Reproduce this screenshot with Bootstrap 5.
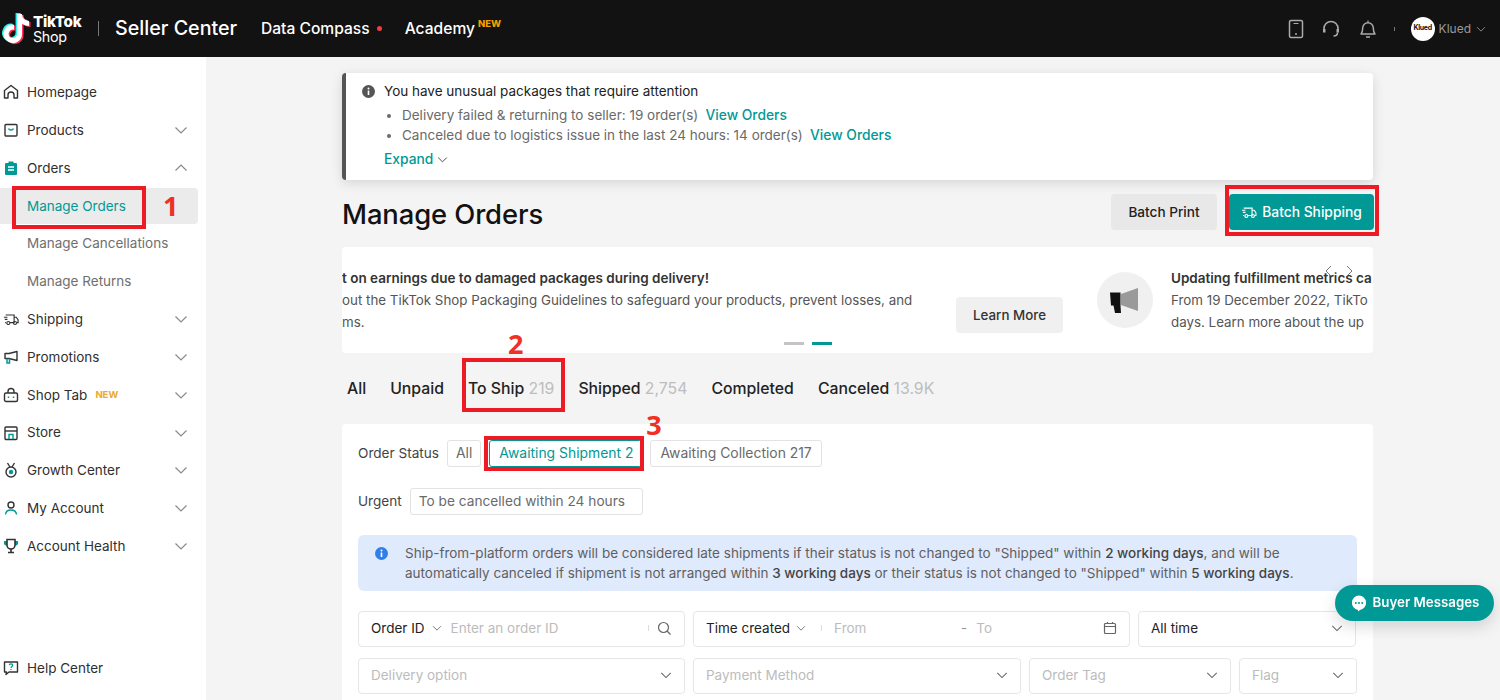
<!DOCTYPE html>
<html lang="en">
<head>
<meta charset="utf-8">
<title>Manage Orders</title>
<link href="https://cdn.jsdelivr.net/npm/bootstrap@5.3.0/dist/css/bootstrap.min.css" rel="stylesheet">
<style>
html,body{height:700px;overflow:hidden}
body{font-family:Inter,"Liberation Sans",sans-serif;font-size:13.5px;color:#121212;background:#f4f4f4}
svg{display:block;flex:none}
.top-bar{height:57px;background:#121212;color:#fff}
.logo-mark{margin-left:1px;width:30px;height:34px;overflow:visible}
.logo-words{margin-left:2px;line-height:15px;color:#fff;width:50px}
.logo-words b{display:block;font-weight:800;font-size:15.2px;letter-spacing:-.3px}
.logo-words span{display:block;font-weight:400;font-size:14.3px;letter-spacing:-.3px}
.top-sep{width:1px;height:15px;background:#777;margin:0 16px 0 15px}
.brand-title{font-size:19.7px;font-weight:500;width:146px}
.top-link{font-size:15.6px;font-weight:500}
.red-dot{width:5px;height:5px;border-radius:50%;background:#ee3f3f;margin:0 23px 0 7px}
.new-tag{font-size:9.5px;font-weight:800;color:#f0a000;margin:-9px 0 0 3px}
.top-icons{color:#aaa;margin-right:14px}
.ico-a{margin-right:16px}
.ico-b{margin:0 18px 0 1px}
.tiny-sep{width:1px;height:4px;background:#777;margin:0 16px 0 17px}
.avatar{width:24px;height:24px;border-radius:50%;background:#fff;color:#121212;font-size:7px;font-weight:700;letter-spacing:-.3px}
.user-name{color:#9a9a9a;font-size:12px;margin:0 5px 0 4px}
.page-row{height:643px}
.side-nav{width:206px;background:#fff;padding-top:16.5px}
.side-item{height:37.8px;padding:0 18px 0 3px;color:#303030;white-space:nowrap}
.side-item svg.ico{margin-right:8px;width:16px;height:16px}
.side-chev{margin-left:auto;color:#8a8a8a}
.side-sub{height:37.8px;padding-left:27px;color:#6f6f6f;white-space:nowrap;margin-right:8px;position:relative}
.side-sub.on{color:#009995;background:#ebebeb;border-radius:0 4px 4px 0;height:36px;margin-top:1px;margin-bottom:.8px}
.side-new{font-size:9.5px;font-weight:700;color:#e9a92a;margin-left:8px}
.side-foot{margin-top:auto;margin-bottom:13px}
.work-area{padding:16px 127px 0 136px;overflow:hidden;background:#f4f4f4}
.notice{height:107px;background:#fff;border-left:4px solid #555;border-radius:4px;box-shadow:0 3px 12px rgba(0,0,0,.13);padding:8px 0 0 16px;line-height:20px;color:#222}
.notice-icon{margin-right:9px}
.notice ul{margin:4px 0 0;padding:0 0 0 18px;color:#6a6a6a}
.notice li{height:20px}
.teal-link{color:#009995;font-weight:500;text-decoration:none;margin-left:3.5px;font-size:13.8px}
.notice-body{margin-left:22px}
.expand-row{color:#009995;font-weight:500;margin-top:4px;font-size:13.8px}
.expand-row svg{color:#444}
.title-row{height:61px;margin-top:6px;padding-top:8px}
.page-title{font-size:27.4px;font-weight:500;margin:7px 0 0;line-height:1;letter-spacing:-.1px}
.btn-soft,.btn-teal{height:36px;border-radius:4px;font-weight:500;border:0;padding:0;display:flex;align-items:center;justify-content:center}
.btn-soft{width:106px;background:#e8e8e8;color:#222;font-size:13.6px}
.btn-teal{width:145px;background:#009995;color:#fff;gap:5px;margin:0 -1px 0 12px;position:relative;font-size:13.8px}
.promo{height:106px;background:#fff;border-radius:4px;overflow:hidden;position:relative;font-size:13.35px}
.promo-left{width:600px;padding-top:20px;color:#555;line-height:22px;white-space:nowrap}
.promo-left b,.promo-right b{font-weight:600;color:#333;display:block;font-size:13.5px}
.promo-btn{width:107px;height:36px;background:#f0f0f0;border-radius:4px;color:#333;font-weight:500;margin:50px 0 0 14px}
.promo-disc{width:56px;height:56px;border-radius:50%;background:#f0f0f0;margin:25px 18px 0 34px}
.promo-right{flex:1;min-width:0;padding-top:20px;color:#555;line-height:22px;white-space:nowrap;overflow:hidden}
.promo-arrows{position:absolute;top:18px;right:19px;gap:12px;color:#777}
.promo-dots{position:absolute;bottom:8px;left:442px;gap:8px}
.promo-dots i{display:block;width:20px;height:3.5px;background:#c4c4c4}
.promo-dots i.on{background:#009995}
.tab-row{height:71px;font-size:15.8px;font-weight:500;padding-left:5px;gap:24px;color:#222}
.tab-count{color:#bdbdbd;font-weight:400}
.tab-ship{position:relative}
.filter-card{background:#fff;border-radius:4px 4px 0 0;height:276px;padding:16px 16px 0}
.chip-line{height:27px;gap:8px}
.chip-line.second{margin-top:21px}
.field-label{color:#444;font-size:13.6px}
.chip{height:27px;border:1px solid #e3e3e3;border-radius:3px;padding:0 8px;color:#6a6a6a;display:flex;align-items:center;white-space:nowrap;position:relative;font-size:13.9px}
.chip.on{color:#009995;border-color:#009995;padding-left:9px}
.chip.coll{padding:0 9px}
.chip.wide{min-width:233px;font-size:13.7px}
.info-box{height:56px;margin-top:20px;background:#dfeafd;border-radius:6px;padding:8px 0 0 17px;color:#5f5f5f;line-height:20px;gap:17px;width:999px}
.info-box b{font-weight:500;color:#444}
.form-line{gap:8px;height:36px}
.form-line.first{margin-top:20px}
.form-line.next{margin-top:11px}
.field{height:36px;background:#fff;border:1px solid #e6e6e6;border-radius:4px;padding:0 12px 2px;color:#bcbcbc;white-space:nowrap}
.field .val{color:#222}
.f-327{width:327px}.f-328{width:328px}.f-437{width:437px}.f-218{width:218px}.f-202{width:202px}.f-118{width:118px}
.chev-end{margin-left:auto;color:#666}
.hair{width:1px;height:6px;background:#ddd}
.chev-a{margin:0 9px 0 7px;color:#666}
.chev-b{margin:0 15px 0 6px;color:#666}
.from-lab{width:127px;margin-left:12px}
.dash{color:#999;margin-right:9px}
.anno{position:absolute;border:4px solid #ed1c24;pointer-events:none}
.anno-num{position:absolute;color:#ee3124;font-family:"Open Sans",sans-serif;font-weight:700;font-size:27px;line-height:1}
.an-1{left:12px;top:-2px;width:134px;height:43px}
.num-1{left:163px;top:4px}
.an-bs{left:-4px;top:-9px;width:154px;height:51px}
.an-2{left:-6px;top:-19px;width:103px;height:54px}
.num-2{left:40px;top:-47px}
.an-3{left:-6px;top:-5px;width:160px;height:35px}
.num-3{left:156px;top:-30px}
.chat-pill{position:fixed;right:6px;top:585px;width:159px;height:36px;background:#009995;color:#fff;border-radius:18px;font-weight:600;gap:5px;box-shadow:0 6px 16px rgba(0,0,0,.14);font-size:13.3px}
</style>
</head>
<body>
<svg width="0" height="0" style="position:absolute"><defs>
<symbol id="ch" viewBox="0 0 14 14"><path d="M1.5 4.5 7 10l5.500-5.500" fill="none" stroke="currentColor" stroke-width="1.2"/></symbol>
<symbol id="note" viewBox="0 0 24 24"><path d="M19.589 6.686a4.793 4.793 0 0 1-3.770-4.245V2h-3.445v13.672a2.896 2.896 0 0 1-5.201 1.743 2.895 2.895 0 0 1 3.183-4.510v-3.500a6.329 6.329 0 0 0-5.394 10.692 6.330 6.330 0 0 0 10.857-4.424V8.687a8.182 8.182 0 0 0 4.773 1.526V6.790a4.831 4.831 0 0 1-1.003-.104z" fill="currentColor"/></symbol>
<symbol id="truck" viewBox="0 0 18 16"><path d="M5 3.500h7.500v8.500H8M12.500 6H15l2 3v3h-1.500M1 6h4M2 8.500h3M3 3.500h2M2.200 12h1" fill="none" stroke="currentColor" stroke-width="1.300"/><circle cx="6" cy="12.500" r="1.700" fill="none" stroke="currentColor" stroke-width="1.300"/><circle cx="13.500" cy="12.500" r="1.700" fill="none" stroke="currentColor" stroke-width="1.300"/></symbol>
</defs></svg>

<header class="top-bar d-flex align-items-center">
  <svg class="logo-mark" viewBox="0 0 30 34"><use href="#note" x="-3.500" y="-2" width="35" height="35" color="#25f4ee"/><use href="#note" x="-.5" y="0" width="35" height="35" color="#fe2c55"/><use href="#note" x="-2" y="-1" width="35" height="35" color="#fff"/></svg>
  <div class="logo-words"><b>TikTok</b><span>Shop</span></div>
  <div class="top-sep"></div>
  <div class="brand-title">Seller Center</div>
  <div class="top-link">Data Compass</div><div class="red-dot"></div>
  <div class="top-link">Academy</div><div class="new-tag">NEW</div>
  <div class="ms-auto d-flex align-items-center top-icons">
    <svg width="16" height="20" viewBox="0 0 16 20" class="ico-a"><rect x="1.500" y="1.500" width="13" height="17" rx="1.500" fill="none" stroke="currentColor" stroke-width="1.500"/><path d="M5.500 4.500h5" stroke="currentColor"/><circle cx="8" cy="15" r="1" fill="currentColor"/></svg>
    <svg width="20" height="20" viewBox="0 0 20 20" class="ico-b"><path d="M3 12V9.500a7 7 0 0 1 14 0V12" fill="none" stroke="currentColor" stroke-width="1.600"/><path d="M2 10h2.500v3.500H2zM15.500 10H18v3.500h-2.500z" fill="currentColor"/><path d="M16.500 13.500c0 2-1.500 3.500-4 3.500" fill="none" stroke="currentColor" stroke-width="1.600"/></svg>
    <svg width="18" height="20" viewBox="0 0 18 20"><path d="M2 15c1.500-1.500 1.700-3 1.700-6a5.300 5.300 0 0 1 10.600 0c0 3 .2 4.500 1.700 6z" fill="none" stroke="currentColor" stroke-width="1.500" stroke-linejoin="round"/><path d="M7 18h4" stroke="currentColor" stroke-width="1.500"/><path d="M9 1.500v2" stroke="currentColor" stroke-width="1.200"/></svg>
    <div class="tiny-sep"></div>
    <div class="avatar d-flex align-items-center justify-content-center">Klued</div>
    <div class="user-name">Klued</div>
    <svg width="10" height="10" style="color:#9a9a9a"><use href="#ch"/></svg>
  </div>
</header>

<div class="page-row d-flex">
  <nav class="side-nav d-flex flex-column flex-shrink-0">
    <div class="side-item d-flex align-items-center"><svg class="ico" viewBox="0 0 16 16"><path d="M1.500 6.500 8 1.500l6.500 5v7.500h-3.500v-3a3 3 0 0 0-6 0v3H1.500z" fill="none" stroke="#333" stroke-width="1.400" stroke-linejoin="round"/></svg>Homepage</div>
    <div class="side-item d-flex align-items-center"><svg class="ico" viewBox="0 0 16 16"><rect x="2" y="2.500" width="12" height="11.500" rx="1" fill="none" stroke="#333" stroke-width="1.400"/><path d="M5.500 6.500c.7 2 4.300 2 5 0" fill="none" stroke="#009995" stroke-width="1.400"/></svg>Products<svg class="side-chev" width="14" height="14"><use href="#ch"/></svg></div>
    <div class="side-item d-flex align-items-center"><svg class="ico" viewBox="0 0 16 16"><path d="M5.500 1.500h5V3H13a1 1 0 0 1 1 1v10a1 1 0 0 1-1 1H3a1 1 0 0 1-1-1V4a1 1 0 0 1 1-1h2.500z" fill="#009995"/><path d="M5 7h6M5 10h6" stroke="#fff" stroke-width="1.400"/></svg>Orders<svg class="side-chev" width="14" height="14" style="transform:rotate(180deg)"><use href="#ch"/></svg></div>
    <div class="side-sub on d-flex align-items-center">Manage Orders<span class="anno an-1"></span><span class="anno-num num-1">1</span></div>
    <div class="side-sub d-flex align-items-center">Manage Cancellations</div>
    <div class="side-sub d-flex align-items-center">Manage Returns</div>
    <div class="side-item d-flex align-items-center"><svg class="ico" viewBox="0 0 18 16"><use href="#truck" color="#333"/></svg>Shipping<svg class="side-chev" width="14" height="14"><use href="#ch"/></svg></div>
    <div class="side-item d-flex align-items-center"><svg class="ico" viewBox="0 0 16 16"><path d="M14 2.500v9L6 9.500H2v-5h4z" fill="none" stroke="#333" stroke-width="1.400" stroke-linejoin="round"/><path d="M4 9.500V14h2.500V9.500" fill="none" stroke="#009995" stroke-width="1.500"/></svg>Promotions<svg class="side-chev" width="14" height="14"><use href="#ch"/></svg></div>
    <div class="side-item d-flex align-items-center"><svg class="ico" viewBox="0 0 16 16"><path d="M5 6V4.500a3 3 0 0 1 6 0V6" fill="none" stroke="#333" stroke-width="1.400"/><rect x="1.500" y="6" width="13" height="8.500" rx="1.500" fill="none" stroke="#333" stroke-width="1.400"/><path d="M5.500 9.500v1.500M10.500 9.500v1.500" stroke="#009995" stroke-width="1.500"/></svg>Shop Tab<span class="side-new">NEW</span><svg class="side-chev" width="14" height="14"><use href="#ch"/></svg></div>
    <div class="side-item d-flex align-items-center"><svg class="ico" viewBox="0 0 16 16"><rect x="2" y="2" width="12" height="12.500" rx="1" fill="none" stroke="#333" stroke-width="1.400"/><path d="M2 6h12" stroke="#333" stroke-width="1.400"/><path d="M6 14v-4.500h4V14" fill="none" stroke="#009995" stroke-width="1.400"/></svg>Store<svg class="side-chev" width="14" height="14"><use href="#ch"/></svg></div>
    <div class="side-item d-flex align-items-center"><svg class="ico" viewBox="0 0 16 16"><circle cx="8" cy="10" r="5" fill="none" stroke="#333" stroke-width="1.400"/><circle cx="8" cy="10" r="2.200" fill="#009995"/><path d="M4.500 1 7 5M11.500 1 9 5" stroke="#333" stroke-width="1.400"/></svg>Growth Center<svg class="side-chev" width="14" height="14"><use href="#ch"/></svg></div>
    <div class="side-item d-flex align-items-center"><svg class="ico" viewBox="0 0 16 16"><circle cx="8" cy="5" r="3" fill="none" stroke="#333" stroke-width="1.400"/><path d="M2.500 14.500c.5-6 10.500-6 11 0" fill="none" stroke="#009995" stroke-width="1.400"/></svg>My Account<svg class="side-chev" width="14" height="14"><use href="#ch"/></svg></div>
    <div class="side-item d-flex align-items-center"><svg class="ico" viewBox="0 0 16 16"><path d="M1 3h14v2.500c0 1.500-1.500 2-3 2H4c-1.500 0-3-.5-3-2z" fill="#009995"/><path d="M8 11v3M5 14.500h6" fill="none" stroke="#333" stroke-width="1.600"/><path d="M4 1.500h8V7a4 4 0 0 1-8 0z" fill="#fff" stroke="#333" stroke-width="1.600"/></svg>Account Health<svg class="side-chev" width="14" height="14"><use href="#ch"/></svg></div>
    <div class="side-item side-foot d-flex align-items-center"><svg class="ico" viewBox="0 0 16 16"><path d="M1.500 2h13v10H6l-3 2.500L3.500 12h-2z" fill="none" stroke="#333" stroke-width="1.400" stroke-linejoin="round"/><path d="M6.300 5.200c.3-2 3.400-1.700 3.400.1 0 1.300-1.700 1.300-1.700 2.700M8 9v1" fill="none" stroke="#009995" stroke-width="1.300"/></svg>Help Center</div>
  </nav>

  <main class="work-area flex-grow-1">
    <section class="notice">
      <div class="d-flex align-items-center"><svg width="13" height="13" viewBox="0 0 13 13" class="notice-icon"><circle cx="6.500" cy="6.500" r="6.500" fill="#555"/><path d="M6.500 5.500v4.500" stroke="#fff" stroke-width="1.600"/><circle cx="6.500" cy="3.500" r="1" fill="#fff"/></svg>You have unusual packages that require attention</div>
      <div class="notice-body">
        <ul>
          <li>Delivery failed &amp; returning to seller: 19 order(s) <a class="teal-link" href="#">View Orders</a></li>
          <li>Canceled due to logistics issue in the last 24 hours: 14 order(s) <a class="teal-link" href="#">View Orders</a></li>
        </ul>
        <div class="expand-row d-flex align-items-center gap-1">Expand<svg width="11" height="11"><use href="#ch"/></svg></div>
      </div>
    </section>

    <div class="title-row d-flex align-items-start justify-content-between">
      <h1 class="page-title">Manage Orders</h1>
      <div class="d-flex">
        <button class="btn-soft">Batch Print</button>
        <button class="btn-teal"><svg width="16" height="14" viewBox="0 0 18 16"><use href="#truck"/></svg>Batch Shipping<span class="anno an-bs"></span></button>
      </div>
    </div>

    <section class="promo d-flex">
      <div class="promo-left"><b>t on earnings due to damaged packages during delivery!</b>out the TikTok Shop Packaging Guidelines to safeguard your products, prevent losses, and<br>ms.</div>
      <div class="promo-btn d-flex align-items-center justify-content-center">Learn More</div>
      <div class="promo-disc d-flex align-items-center justify-content-center flex-shrink-0"><svg width="34" height="30" viewBox="0 0 34 30"><path d="M13 9 30 3v23l-17-6z" fill="#9a9a9a"/><path d="M2 7.500h10.500v13L13 28H7l-1.500-7.500H3z" fill="#111"/></svg></div>
      <div class="promo-right"><b>Updating fulfillment metrics ca</b>From 19 December 2022, TikTo<br>days. Learn more about the up</div>
      <div class="promo-arrows d-flex"><svg width="9" height="12" viewBox="0 0 9 12"><path d="M7 1 2 6l5 5" fill="none" stroke="currentColor"/></svg><svg width="9" height="12" viewBox="0 0 9 12"><path d="m2 1 5 5-5 5" fill="none" stroke="currentColor"/></svg></div>
      <div class="promo-dots d-flex"><i></i><i class="on"></i></div>
    </section>

    <div class="tab-row d-flex align-items-center">
      <span>All</span><span>Unpaid</span>
      <span class="tab-ship">To Ship <span class="tab-count">219</span><span class="anno an-2"></span><span class="anno-num num-2">2</span></span>
      <span>Shipped <span class="tab-count">2,754</span></span>
      <span>Completed</span>
      <span>Canceled <span class="tab-count">13.9K</span></span>
    </div>

    <section class="filter-card">
      <div class="chip-line d-flex align-items-center">
        <span class="field-label">Order Status</span>
        <span class="chip">All</span>
        <span class="chip on">Awaiting Shipment 2<span class="anno an-3"></span><span class="anno-num num-3">3</span></span>
        <span class="chip coll">Awaiting Collection 217</span>
      </div>
      <div class="chip-line second d-flex align-items-center">
        <span class="field-label">Urgent</span>
        <span class="chip wide">To be cancelled within 24 hours</span>
      </div>
      <div class="info-box d-flex">
        <svg width="13" height="13" viewBox="0 0 13 13" class="mt-1"><circle cx="6.500" cy="6.500" r="6.500" fill="#2f7fe8"/><path d="M6.500 5.500v4.500" stroke="#fff" stroke-width="1.600"/><circle cx="6.500" cy="3.500" r="1" fill="#fff"/></svg>
        <div>Ship-from-platform orders will be considered late shipments if their status is not changed to "Shipped" within <b>2 working days</b>, and will be<br>automatically canceled if shipment is not arranged within <b>3 working days</b> or their status is not changed to "Shipped" within <b>5 working days</b>.</div>
      </div>
      <div class="form-line first d-flex">
        <div class="field f-327 d-flex align-items-center"><span class="val">Order ID</span><svg width="10" height="10" class="chev-a"><use href="#ch"/></svg><span>Enter an order ID</span><span class="hair ms-auto me-2"></span><svg width="15" height="15" viewBox="0 0 15 15" style="color:#666"><circle cx="6.500" cy="6.500" r="5" fill="none" stroke="currentColor" stroke-width="1.200"/><path d="m10 10 3.500 3.500" stroke="currentColor" stroke-width="1.200"/></svg></div>
        <div class="field f-437 d-flex align-items-center"><span class="val">Time created</span><svg width="10" height="10" class="chev-b"><use href="#ch"/></svg><span class="hair"></span><span class="from-lab">From</span><span class="dash">-</span><span>To</span><svg width="14" height="14" viewBox="0 0 14 14" class="ms-auto" style="color:#666"><rect x="1.500" y="2.500" width="11" height="10" rx="1" fill="none" stroke="currentColor" stroke-width="1.200"/><path d="M1.500 5.500h11M4.500 1v2M9.500 1v2" stroke="currentColor" stroke-width="1.200"/></svg></div>
        <div class="field f-218 d-flex align-items-center"><span class="val">All time</span><svg class="chev-end" width="12" height="12"><use href="#ch"/></svg></div>
      </div>
      <div class="form-line next d-flex">
        <div class="field f-327 d-flex align-items-center">Delivery option<svg class="chev-end" width="12" height="12"><use href="#ch"/></svg></div>
        <div class="field f-328 d-flex align-items-center">Payment Method<svg class="chev-end" width="12" height="12"><use href="#ch"/></svg></div>
        <div class="field f-202 d-flex align-items-center">Order Tag<svg class="chev-end" width="12" height="12"><use href="#ch"/></svg></div>
        <div class="field f-118 d-flex align-items-center">Flag<svg class="chev-end" width="12" height="12"><use href="#ch"/></svg></div>
      </div>
    </section>
  </main>
</div>

<div class="chat-pill d-flex align-items-center justify-content-center"><svg width="18" height="18" viewBox="0 0 18 18"><path d="M9 1.500a7.300 7.300 0 0 1 1 14.500l-2 1.500V16A7.300 7.300 0 0 1 9 1.500z" fill="#fff"/><circle cx="5.800" cy="9" r="1" fill="#009995"/><circle cx="9" cy="9" r="1" fill="#009995"/><circle cx="12.200" cy="9" r="1" fill="#009995"/></svg>Buyer Messages</div>
<script src="https://cdn.jsdelivr.net/npm/bootstrap@5.3.0/dist/js/bootstrap.bundle.min.js"></script>
</body>
</html>
